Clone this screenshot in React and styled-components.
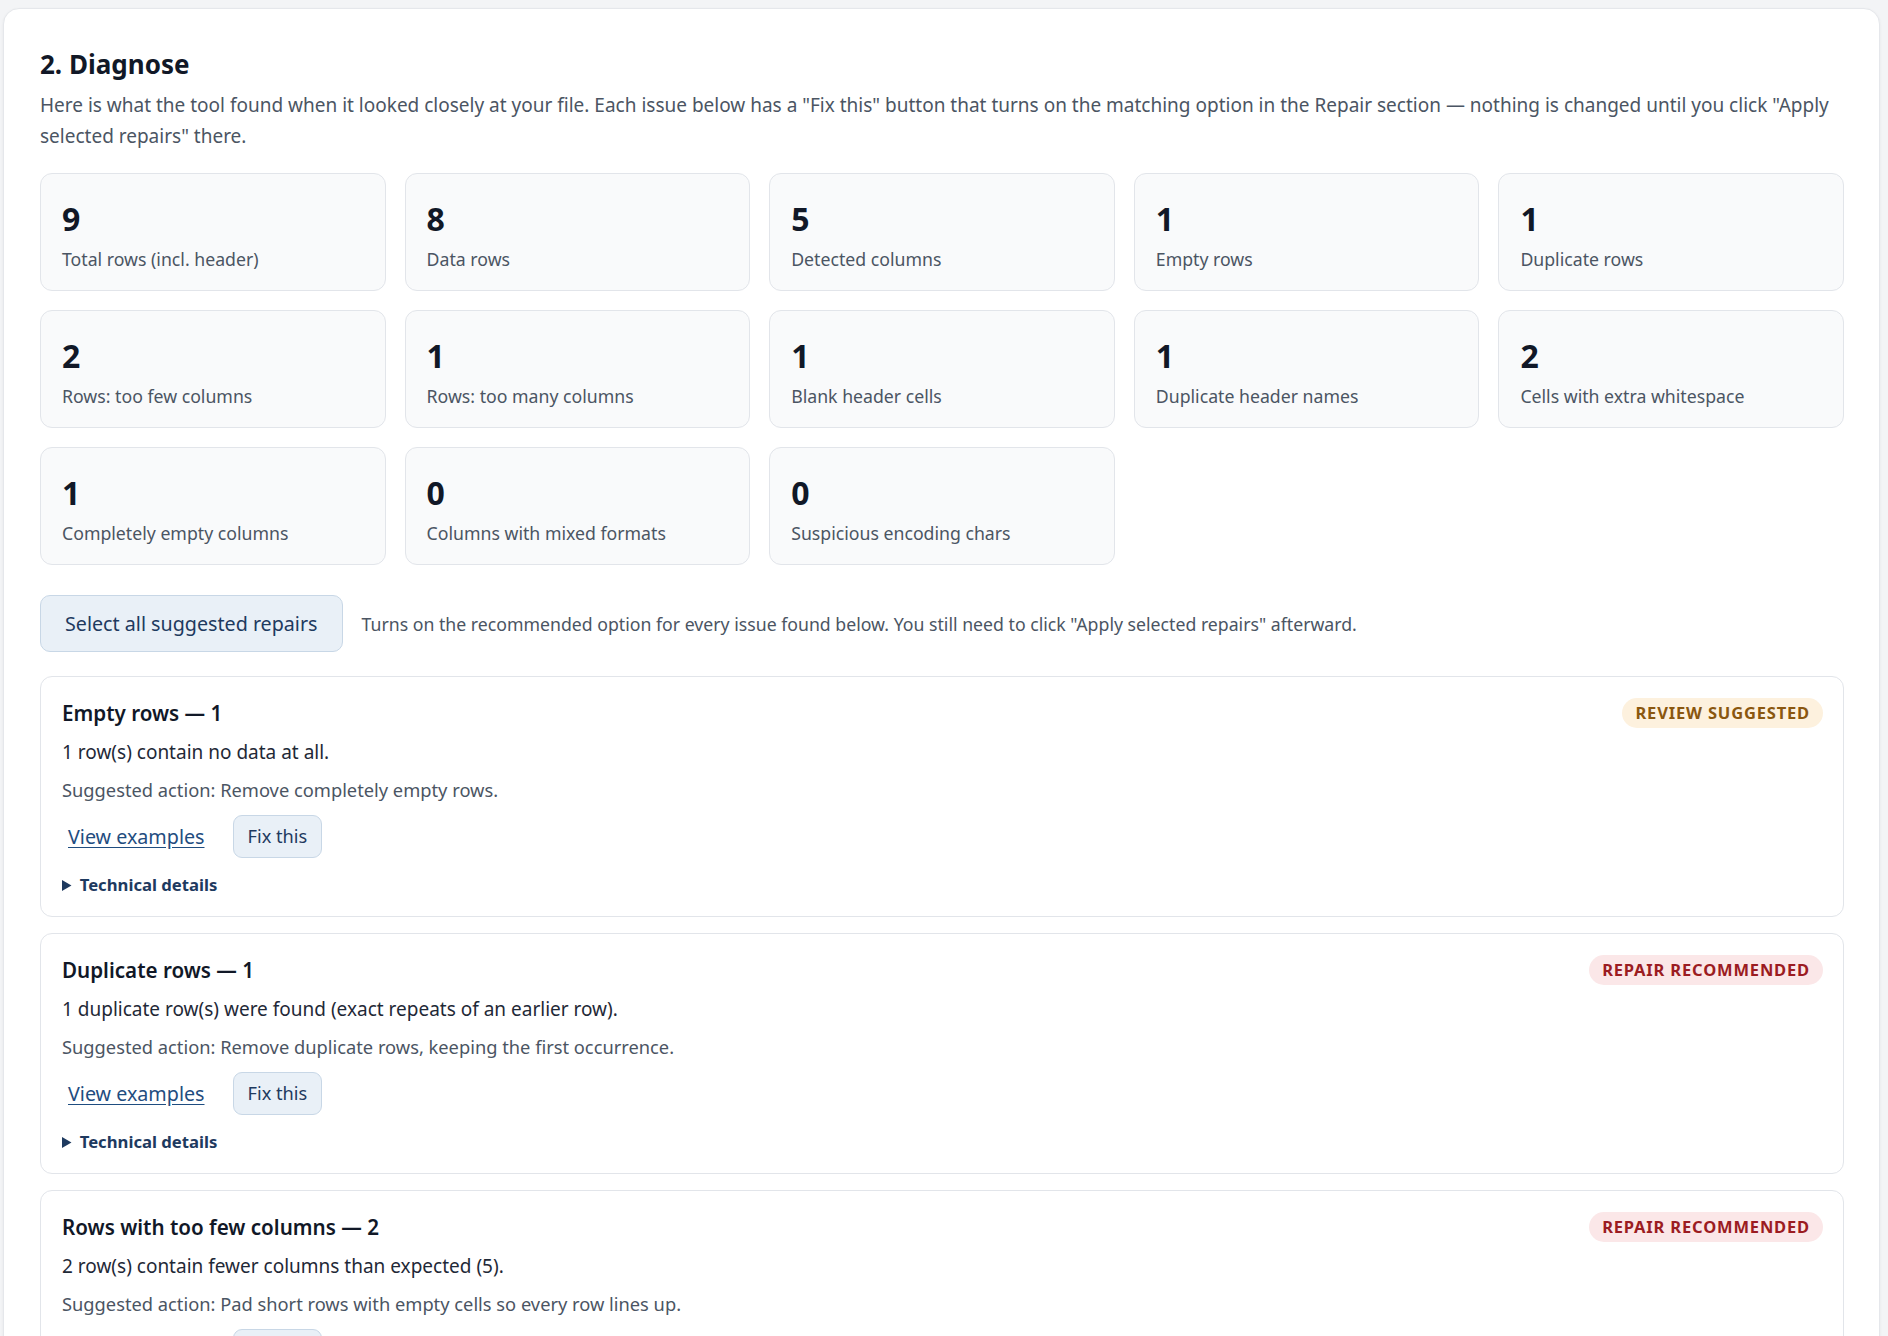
import styled, { createGlobalStyle } from 'styled-components';

const GlobalStyle = createGlobalStyle`
  * {
    box-sizing: border-box;
  }

  body {
    margin: 0;
    background: #f3f4f6;
    font-family: 'Segoe UI', 'Noto Sans', sans-serif;
    color: #111827;
  }
`;

const Panel = styled.section`
  margin: 8px 8px 0 3px;
  background: #ffffff;
  border: 1px solid #e5e7eb;
  border-radius: 16px;
  box-shadow: 0 1px 3px rgba(15, 23, 42, 0.06);
  padding: 37px 35px 40px 36px;
`;

const Heading = styled.h2`
  margin: 0 0 8px;
  font-size: 26px;
  line-height: 36px;
  font-weight: 700;
  color: #111827;
`;

const Intro = styled.p`
  margin: 0 0 21px;
  font-size: 19px;
  line-height: 31px;
  color: #4b5563;
`;

const StatGrid = styled.div`
  display: grid;
  grid-template-columns: repeat(5, 1fr);
  gap: 19px;
  margin-bottom: 30px;
`;

const StatCard = styled.div`
  height: 118px;
  padding: 26px 21px 0;
  background: #f9fafb;
  border: 1px solid #e2e5ea;
  border-radius: 12px;
`;

const StatValue = styled.div`
  font-size: 32px;
  line-height: 38px;
  font-weight: 700;
  color: #111827;
`;

const StatLabel = styled.div`
  margin-top: 9px;
  font-size: 17.7px;
  line-height: 24px;
  color: #4b5563;
`;

const BulkRow = styled.div`
  display: flex;
  align-items: center;
  gap: 19px;
  margin-bottom: 24px;
`;

const SoftButton = styled.button`
  font-family: inherit;
  font-size: ${({ size }) => size || '18px'};
  line-height: 25px;
  color: #1e3a5f;
  background: #e9f0f7;
  border: 1px solid #c8d7e6;
  border-radius: ${({ radius }) => radius || '10px'};
  padding: ${({ pad }) => pad || '8px 15px'};
  cursor: pointer;
`;

const Hint = styled.span`
  font-size: 17.7px;
  color: #4b5563;
`;

const IssueList = styled.div`
  display: flex;
  flex-direction: column;
  gap: 16px;
`;

const IssueCard = styled.article`
  background: #ffffff;
  border: 1px solid #e2e5ea;
  border-radius: 12px;
  padding: 20px 20px 19px 21px;
`;

const IssueHeader = styled.div`
  display: flex;
  align-items: center;
  justify-content: space-between;
  height: 31px;
  margin-bottom: 10px;
`;

const IssueTitle = styled.h3`
  margin: 0;
  font-size: 20.6px;
  line-height: 26px;
  font-weight: 600;
  color: #111827;
`;

const Badge = styled.span`
  font-size: 16.5px;
  line-height: 23px;
  font-weight: 700;
  letter-spacing: 0.05em;
  text-transform: uppercase;
  padding: 3px 13px 4px;
  border-radius: 999px;
  color: ${({ tone }) => (tone === 'review' ? '#8a570f' : '#9b1c22')};
  background: ${({ tone }) => (tone === 'review' ? '#fdf1de' : '#fbe7e8')};
`;

const IssueText = styled.p`
  margin: 0 0 10px;
  font-size: 19px;
  line-height: 28px;
  color: #1f2937;
`;

const Suggestion = styled.p`
  margin: 0 0 12px;
  font-size: 18.3px;
  line-height: 27px;
  color: #4b5563;
`;

const Actions = styled.div`
  display: flex;
  align-items: center;
  gap: 22px;
  margin-bottom: 15px;
`;

const LinkButton = styled.a`
  font-size: 19.7px;
  line-height: 26px;
  color: #1f4d80;
  text-decoration: underline;
  text-underline-offset: 3px;
  padding: 0 6px;
  cursor: pointer;
`;

const Details = styled.details`
  font-size: 16.7px;
  line-height: 24px;

  summary {
    font-weight: 700;
    color: #1e3a5f;
    cursor: pointer;
  }
`;

const stats = [
  { value: 9, label: 'Total rows (incl. header)' },
  { value: 8, label: 'Data rows' },
  { value: 5, label: 'Detected columns' },
  { value: 1, label: 'Empty rows' },
  { value: 1, label: 'Duplicate rows' },
  { value: 2, label: 'Rows: too few columns' },
  { value: 1, label: 'Rows: too many columns' },
  { value: 1, label: 'Blank header cells' },
  { value: 1, label: 'Duplicate header names' },
  { value: 2, label: 'Cells with extra whitespace' },
  { value: 1, label: 'Completely empty columns' },
  { value: 0, label: 'Columns with mixed formats' },
  { value: 0, label: 'Suspicious encoding chars' },
];

const issues = [
  {
    title: 'Empty rows — 1',
    tone: 'review',
    badge: 'Review suggested',
    text: '1 row(s) contain no data at all.',
    action: 'Suggested action: Remove completely empty rows.',
  },
  {
    title: 'Duplicate rows — 1',
    tone: 'repair',
    badge: 'Repair recommended',
    text: '1 duplicate row(s) were found (exact repeats of an earlier row).',
    action: 'Suggested action: Remove duplicate rows, keeping the first occurrence.',
  },
  {
    title: 'Rows with too few columns — 2',
    tone: 'repair',
    badge: 'Repair recommended',
    text: '2 row(s) contain fewer columns than expected (5).',
    action: 'Suggested action: Pad short rows with empty cells so every row lines up.',
  },
];

function Issue({ issue }) {
  return (
    <IssueCard>
      <IssueHeader>
        <IssueTitle>{issue.title}</IssueTitle>
        <Badge tone={issue.tone}>{issue.badge}</Badge>
      </IssueHeader>
      <IssueText>{issue.text}</IssueText>
      <Suggestion>{issue.action}</Suggestion>
      <Actions>
        <LinkButton>View examples</LinkButton>
        <SoftButton size="18.2px" radius="9px" pad="8px 14px">
          Fix this
        </SoftButton>
      </Actions>
      <Details>
        <summary>Technical details</summary>
      </Details>
    </IssueCard>
  );
}

export default function App() {
  return (
    <>
      <GlobalStyle />
      <Panel>
        <Heading>2. Diagnose</Heading>
        <Intro>
          Here is what the tool found when it looked closely at your file. Each
          issue below has a "Fix this" button that turns on the matching option
          in the Repair section — nothing is changed until you click "Apply
          selected repairs" there.
        </Intro>
        <StatGrid>
          {stats.map((s) => (
            <StatCard key={s.label}>
              <StatValue>{s.value}</StatValue>
              <StatLabel>{s.label}</StatLabel>
            </StatCard>
          ))}
        </StatGrid>
        <BulkRow>
          <SoftButton size="19.7px" pad="15px 24px">
            Select all suggested repairs
          </SoftButton>
          <Hint>
            Turns on the recommended option for every issue found below. You
            still need to click "Apply selected repairs" afterward.
          </Hint>
        </BulkRow>
        <IssueList>
          {issues.map((issue) => (
            <Issue key={issue.title} issue={issue} />
          ))}
        </IssueList>
      </Panel>
    </>
  );
}
